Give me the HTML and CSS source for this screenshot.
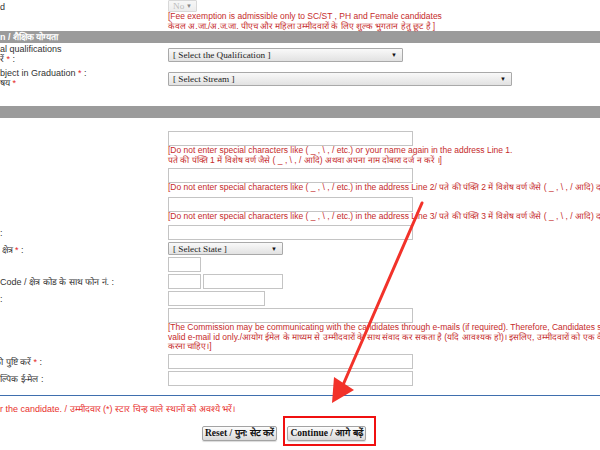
FILE: index.html
```html
<!DOCTYPE html>
<html lang="hi">
<head>
  <meta charset="UTF-8" />
  <meta name="viewport" content="width=device-width, initial-scale=1.0"/>
  <title>Online Application - Part I</title>
  <link rel="stylesheet" href="styles.css">
</head>
<body>
  <form class="reg-form" id="regForm">
    <div class="row fee-row">
      <div class="label">d</div>
      <div class="field">
        <div class="select-box w-tiny disabled">
          <select disabled><option>No</option></select>
        </div>
        <p class="note">[Fee exemption is admissible only to SC/ST , PH and Female candidates<br>केवल अ.जा./अ.ज.जा. पीएच और महिला उम्मीदवारों के लिए शुल्क भुगतान हेतु छूट है ]</p>
      </div>
    </div>

    <div class="section">n / शैक्षिक योग्यता</div>

    <div class="row sel-row">
      <div class="label">al qualifications<br>रें <span class="req">*</span> :</div>
      <div class="field">
        <div class="select-box w-qual">
          <select><option>[ Select the Qualification ]</option></select>
        </div>
      </div>
    </div>
    <div class="row sel-row">
      <div class="label">bject in Graduation <span class="req">*</span> :<br>षय <span class="req">*</span></div>
      <div class="field">
        <div class="select-box w-stream">
          <select><option>[ Select Stream ]</option></select>
        </div>
      </div>
    </div>

    <div class="section section-gap"></div>

    <div class="block">
      <div class="row addr">
        <div class="label"></div>
        <div class="field">
          <input type="text" class="txt w-long" />
          <p class="note">[Do not enter special characters like ( _ , \ , / etc.) or your name again in the address Line 1.<br>पते की पंक्ति 1 में विशेष वर्ण जैसे ( _ , \ , / आदि) अथवा अपना नाम दोबारा दर्ज न करें ।]</p>
        </div>
      </div>
      <div class="row addr">
        <div class="label"></div>
        <div class="field">
          <input type="text" class="txt w-long" />
          <p class="note single">[Do not enter special characters like ( _ , \ , / etc.) in the address Line 2/ पते की पंक्ति 2 में विशेष वर्ण जैसे ( _ , \ , / आदि) दर्ज न करें ।]</p>
        </div>
      </div>
      <div class="row addr">
        <div class="label"></div>
        <div class="field">
          <input type="text" class="txt w-long" />
          <p class="note single">[Do not enter special characters like ( _ , \ , / etc.) in the address Line 3/ पते की पंक्ति 3 में विशेष वर्ण जैसे ( _ , \ , / आदि) दर्ज न करें ।]</p>
        </div>
      </div>
      <div class="row">
        <div class="label">:</div>
        <div class="field"><input type="text" class="txt w-long" /></div>
      </div>
      <div class="row">
        <div class="label cut">शासित क्षेत्र <span class="req">*</span> :</div>
        <div class="field">
          <div class="select-box w-state">
            <select><option>[ Select State ]</option></select>
          </div>
        </div>
      </div>
      <div class="row">
        <div class="label"></div>
        <div class="field"><input type="text" class="txt w-pin" /></div>
      </div>
      <div class="row">
        <div class="label">Code / क्षेत्र कोड के साथ फोन नं. :</div>
        <div class="field pair">
          <input type="text" class="txt w-pin" />
          <input type="text" class="txt w-phone" />
        </div>
      </div>
      <div class="row">
        <div class="label">:</div>
        <div class="field"><input type="text" class="txt w-mob" /></div>
      </div>
      <div class="row">
        <div class="label"></div>
        <div class="field">
          <input type="text" class="txt w-long" />
          <p class="note">[The Commission may be communicating with the candidates through e-mails (if required). Therefore, Candidates should provide their own<br>valid e-mail id only./आयोग ईमेल के माध्यम से उम्मीदवारों के साथ संवाद कर सकता है (यदि आवश्यक हो)। इसलिए, उम्मीदवारों को एक वैध ई-मेल आईडी प्रदान<br>करना चाहिए।]</p>
        </div>
      </div>
      <div class="row">
        <div class="label cut-k">की पुष्टि करें <span class="req">*</span> :</div>
        <div class="field"><input type="text" class="txt w-long" /></div>
      </div>
      <div class="row">
        <div class="label">ल्पिक ई-मेल :</div>
        <div class="field"><input type="text" class="txt w-long" /></div>
      </div>
    </div>

    <hr class="divider" />

    <p class="mandatory">r the candidate. / उम्मीदवार (*) स्टार चिन्ह वाले स्थानों को अवश्ये भरें।</p>

    <div class="actions">
      <button type="reset" class="btn">Reset / पुन: सेट करें</button>
      <button type="submit" class="btn">Continue / आगे बढ़ें</button>
    </div>
  </form>

  <!-- annotation drawn over the form -->
  <div class="highlight"></div>
  <svg class="arrow" width="600" height="450" viewBox="0 0 600 450">
    <line x1="422" y1="203" x2="343" y2="385" stroke="#f2322a" stroke-width="3" stroke-linecap="round" />
    <polygon points="332,403 334,377 354,390" fill="#f2322a" />
  </svg>
</body>
</html>
```

FILE: styles.css
```css
html, body {
  margin: 0;
  overflow: hidden;
}

body {
  width: 600px;
  height: 450px;
  position: relative;
  background: #fff;
  color: #333;
  font-family: "Liberation Sans", Arial, sans-serif;
  font-size: 9px;
}

.row {
  display: grid;
  grid-template-columns: 168px 1fr;
}

.label {
  line-height: 10px;
  white-space: nowrap;
  overflow: hidden;
  padding-top: 3px;
}

/* labels are partly scrolled out of view on the left */
.label.cut {
  text-indent: -22px;
}

.label.cut-k {
  text-indent: -6px;
}

.field {
  white-space: nowrap;
}

.pair {
  display: flex;
  gap: 2px;
}

.req {
  color: #e31b1b;
}

.note {
  margin: 0;
  color: #c52a2a;
  font-size: 8.5px;
  line-height: 9.5px;
  white-space: nowrap;
}

.note.single {
  padding-bottom: 1px;
}

.fee-row .label {
  padding-top: 2px;
}

.section {
  height: 12px;
  line-height: 12px;
  background: #9b9b9b;
  color: #fff;
  font-weight: bold;
}

.section-gap {
  margin-top: 15px;
}

.sel-row {
  margin-top: 1px;
  min-height: 23px;
}

.sel-row .label {
  padding-top: 0;
}

.sel-row .select-box {
  margin-top: 4px;
}

/* selects */
.select-box {
  position: relative;
  height: 14px;
}

.select-box select {
  appearance: none;
  -webkit-appearance: none;
  display: block;
  width: 100%;
  height: 100%;
  margin: 0;
  padding: 0 0 0 4px;
  box-sizing: border-box;
  border: 1px solid #a9a9a9;
  border-radius: 1px;
  background: linear-gradient(#f9f9f9, #e2e2e2);
  color: #222;
  font-family: "Liberation Serif", "Times New Roman", serif;
  font-size: 9.2px;
  line-height: 12px;
}

.select-box::after {
  content: "\25BC";
  position: absolute;
  right: 6px;
  top: 3px;
  font-size: 6px;
  line-height: 8px;
  color: #111;
  pointer-events: none;
}

.select-box.disabled select {
  background: linear-gradient(#f4f4f4, #e6e6e6);
  border-color: #c8c8c8;
  color: #a0a0a0;
  line-height: 10px;
}

.select-box.disabled::after {
  color: #888;
  right: 5px;
  top: 2px;
}

.w-tiny { width: 29px; height: 12px; }
.w-qual { width: 235px; }
.w-stream { width: 344px; }
.w-state { width: 115px; height: 13px; }

/* text inputs */
.block {
  margin-top: 13px;
  display: flex;
  flex-direction: column;
  gap: 2px;
}

.addr {
  margin-bottom: 1px;
}

.txt {
  display: block;
  height: 15px;
  margin: 0;
  padding: 0 3px;
  box-sizing: border-box;
  border: 1px solid #c4c4c4;
  background: #fff;
}

.w-long { width: 245px; }
.w-pin { width: 33px; }
.w-phone { width: 80px; }
.w-mob { width: 97px; }

.divider {
  margin: 9px 0 0;
  border: 0;
  border-top: 1px solid #3f6fae;
}

.mandatory {
  margin: 8px 0 0;
  color: #e8312d;
  font-size: 9px;
  line-height: 10px;
  white-space: nowrap;
}

.actions {
  display: flex;
  gap: 10px;
  margin-top: 12px;
  padding-left: 202px;
}

.btn {
  height: 15px;
  padding: 0 2px;
  border: 1px solid #a3a3a3;
  border-radius: 2px;
  background: linear-gradient(#fdfdfd, #d9d9d9);
  box-shadow: 0 1px 1px rgba(0,0,0,0.15);
  color: #111;
  font-family: "Liberation Serif", "Times New Roman", serif;
  font-size: 9.5px;
  font-weight: bold;
  line-height: 13px;
}

/* annotation */
.highlight {
  position: absolute;
  left: 283px;
  top: 416px;
  width: 93px;
  height: 30px;
  box-sizing: border-box;
  border: 2px solid #f01010;
}

.arrow {
  position: absolute;
  left: 0;
  top: 0;
  pointer-events: none;
}
```
